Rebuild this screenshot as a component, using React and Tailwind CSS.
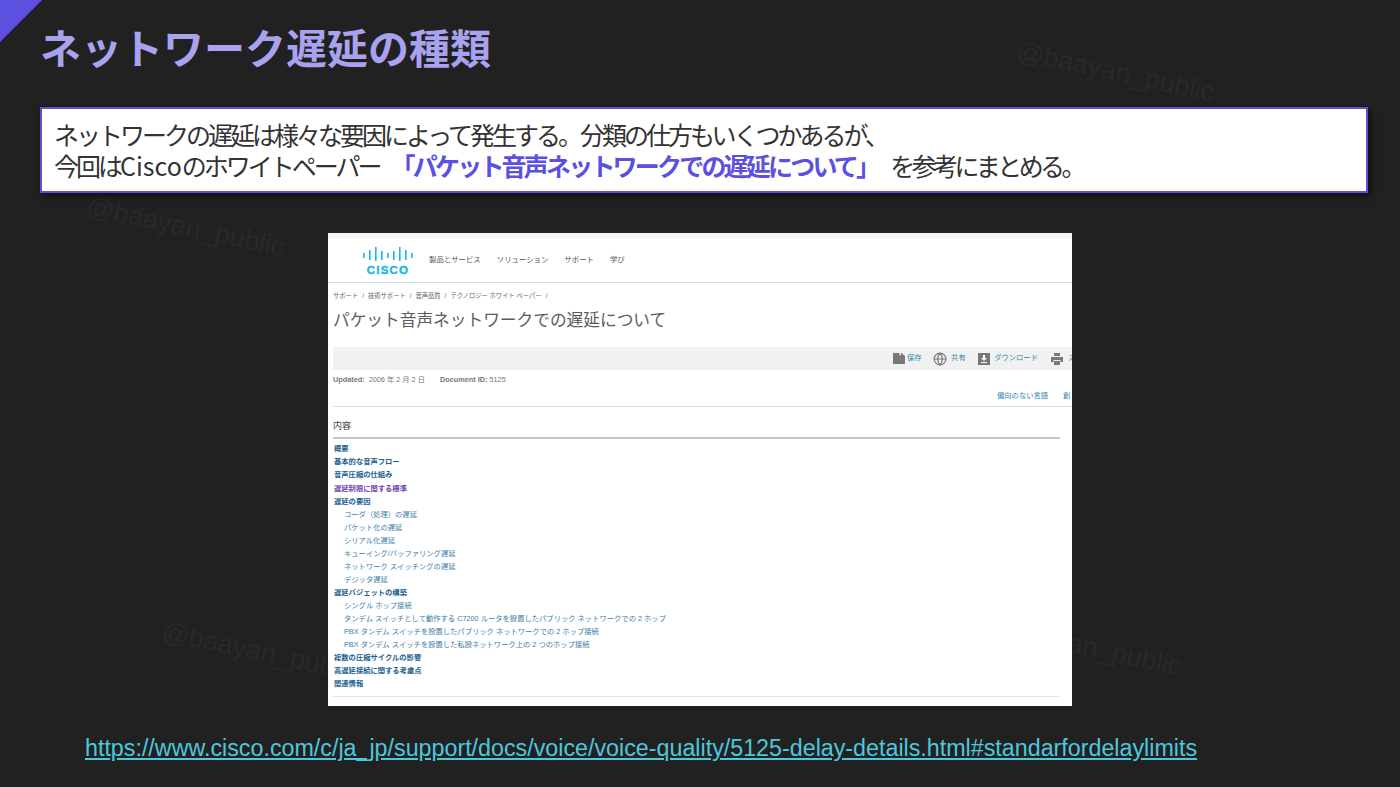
import React from 'react'
import { Globe } from 'lucide-react'

const toc = [
  { t: '概要' },
  { t: '基本的な音声フロー' },
  { t: '音声圧縮の仕組み' },
  { t: '遅延制限に関する標準', visited: true },
  { t: '遅延の要因' },
  { t: 'コーダ（処理）の遅延', sub: true },
  { t: 'パケット化の遅延', sub: true },
  { t: 'シリアル化遅延', sub: true },
  { t: 'キューイング/バッファリング遅延', sub: true },
  { t: 'ネットワーク スイッチングの遅延', sub: true },
  { t: 'デジッタ遅延', sub: true },
  { t: '遅延バジェットの構築' },
  { t: 'シングル ホップ接続', sub: true },
  { t: 'タンデム スイッチとして動作する C7200 ルータを設置したパブリック ネットワークでの 2 ホップ', sub: true },
  { t: 'PBX タンデム スイッチを設置したパブリック ネットワークでの 2 ホップ接続', sub: true },
  { t: 'PBX タンデム スイッチを設置した私設ネットワーク上の 2 つのホップ接続', sub: true },
  { t: '複数の圧縮サイクルの影響' },
  { t: '高遅延接続に関する考慮点' },
  { t: '関連情報' },
]

const Watermark = ({ className }) => (
  <div className={`absolute origin-top-left rotate-[12deg] whitespace-nowrap font-['Liberation_Sans',sans-serif] text-[27px] leading-none text-[#292929] ${className}`}>
    @baayan_public
  </div>
)

const CiscoLogo = () => (
  <svg width="50" height="28" viewBox="0 0 50 28">
    <g fill="#1ab7e6">
      <rect x="0" y="6" width="1.6" height="5" />
      <rect x="6" y="3" width="1.6" height="10" />
      <rect x="12" y="0" width="1.6" height="14" />
      <rect x="18" y="4" width="1.6" height="9" />
      <rect x="24" y="6" width="1.6" height="5" />
      <rect x="30" y="4" width="1.6" height="9" />
      <rect x="36" y="0" width="1.6" height="14" />
      <rect x="42" y="3" width="1.6" height="10" />
      <rect x="48" y="6" width="1.6" height="5" />
    </g>
    <text x="25" y="26.500" textAnchor="middle" fill="#1ab7e6" stroke="#1ab7e6" strokeWidth="0.4" fontFamily="Liberation Sans, sans-serif" fontWeight="700" fontSize="11.500" letterSpacing="1.200">CISCO</text>
  </svg>
)

const SaveIcon = () => (
  <svg className="shrink-0" width="12" height="11" viewBox="0 0 12 11">
    <path d="M0 0h8.500L12 3v8H0z" fill="#77777c" />
    <path d="M6.500 0h1.500v2.500H6.500z" fill="#f1f1f1" />
  </svg>
)
const DownloadIcon = () => (
  <svg className="shrink-0" width="12" height="12" viewBox="0 0 12 12">
    <path d="M0 0h12v12H0z" fill="#77777c" />
    <path d="M5 2h2v3h2L6 8 3 5h2zM3 9h6v1H3z" fill="#fff" />
  </svg>
)
const PrintIcon = () => (
  <svg className="shrink-0" width="12" height="12" viewBox="0 0 12 12">
    <path d="M3 0h6v3H3zM0 4h12v5H9.500V7h-7v2H0zM3 8h6v4H3z" fill="#77777c" />
  </svg>
)

const Screenshot = () => (
  <div className="mt-[40px] ml-[328px] h-[473px] w-[744px] overflow-hidden bg-white font-['Liberation_Sans','Noto_Sans_CJK_JP',sans-serif]">
    <div className="h-[6px] bg-[#f3f4f5]"></div>
    <div className="flex h-[44px] items-center border-b border-[#dcdcdc] pl-[35px]">
      <CiscoLogo />
      <nav className="-mt-[2px] ml-[16px] flex gap-[16px] text-[7.400px] text-[#55555a]">
        <span>製品とサービス</span>
        <span>ソリューション</span>
        <span>サポート</span>
        <span>学び</span>
      </nav>
    </div>
    <div className="pl-[5px]">
      <div className="mt-[8px] flex gap-[4px] text-[6.300px] leading-[10px] text-[#66666a]">
        <span>サポート</span><span>/</span><span>技術サポート</span><span>/</span><span>音声品質</span><span>/</span><span>テクノロジー ホワイト ペーパー</span><span>/</span>
      </div>
      <h1 className="mt-[8px] text-[16.700px] leading-[24px] whitespace-nowrap text-[#5c5c60]">パケット音声ネットワークでの遅延について</h1>
      <div className="mt-[14px] flex h-[23px] items-center whitespace-nowrap bg-[#f1f1f1] pl-[560px] text-[7.300px] text-[#2a8bad]">
        <SaveIcon /><span className="ml-[2px]">保存</span>
        <Globe size={14} color="#77777c" className="ml-[11.500px] shrink-0" /><span className="ml-[4px]">共有</span>
        <span className="ml-[12.500px] shrink-0"><DownloadIcon /></span><span className="ml-[4px]">ダウンロード</span>
        <span className="ml-[13px] shrink-0"><PrintIcon /></span><span className="ml-[5px]">ス</span>
      </div>
      <div className="mt-[5px] flex h-[11px] items-center text-[7.300px] text-[#77777c]">
        <b>Updated:</b><span className="ml-[4px]">2006 年 2 月 2 日</span>
        <b className="ml-[15px]">Document ID:</b><span className="ml-[2px]">5125</span>
      </div>
      <div className="mt-[4px] flex h-[11px] gap-[15px] pl-[664px] text-[7.300px] leading-[11px] whitespace-nowrap text-[#2a8bad]">
        <span>偏向のない言語</span><span>創</span>
      </div>
      <div className="mt-[5px] h-px bg-[#dedede]"></div>
      <div className="mr-[12px]">
        <div className="mt-[13px] text-[9px] leading-[12px] text-[#444448]">内容</div>
        <div className="mt-[5px] h-[2px] bg-[#c8c8c8]"></div>
        <ul className="mt-[3.400px]">
          {toc.map((item) => (
            <li
              key={item.t}
              className={`h-[13.050px] whitespace-nowrap text-[7.300px] leading-[13px] ${item.sub ? 'pl-[11px] text-[#3d7ca8]' : item.visited ? 'pl-px font-bold text-[#6b46b5]' : 'pl-px font-bold text-[#236192]'}`}
            >
              {item.t}
            </li>
          ))}
        </ul>
        <div className="mt-[6px] h-px bg-[#e4e4e4]"></div>
      </div>
    </div>
  </div>
)

export default function App() {
  return (
    <div className="relative h-[787px] w-[1400px] overflow-hidden bg-[#212121] font-['Noto_Sans_CJK_JP',sans-serif]">
      <Watermark className="top-[38px] left-[1020px]" />
      <Watermark className="top-[193px] left-[90px]" />
      <Watermark className="top-[618px] left-[165px]" />
      <Watermark className="top-[612px] left-[987px]" />
      <svg className="absolute top-0 left-0" width="42" height="42" viewBox="0 0 42 42">
        <path d="M0 0h42L0 42z" fill="#5b50e0" />
      </svg>
      <div className="relative">
        <h1 className="pt-[19px] pl-[40px] text-[41px] leading-[54px] font-bold text-[#a9a2ee]">ネットワーク遅延の種類</h1>
        <div className="mt-[34px] ml-[40px] w-[1328px] border-2 border-[#5b50d8] bg-white py-[10px] pl-[12px] text-[25px] leading-[31px] tracking-[-3px] text-[#333333] shadow-[3px_3px_6px_rgba(0,0,0,0.5)]">
          <p>ネットワークの遅延は様々な要因によって発生する。分類の仕方もいくつかあるが、</p>
          <p>
            今回は<span className="tracking-[0px]">Cisco</span>のホワイトペーパー
            <span className="ml-[11px] font-bold tracking-[-2.800px] text-[#5b50e0]">「パケット音声ネットワークでの遅延について」</span>
            <span className="ml-[12px] tracking-[-3.600px]">を参考にまとめる。</span>
          </p>
        </div>
        <Screenshot />
        <div className="mt-[27px] pl-[85px] font-['Liberation_Sans',sans-serif] text-[23.270px] leading-[30px] text-[#4dc8dc] underline underline-offset-2">
          https://www.cisco.com/c/ja_jp/support/docs/voice/voice-quality/5125-delay-details.html#standarfordelaylimits
        </div>
      </div>
    </div>
  )
}
